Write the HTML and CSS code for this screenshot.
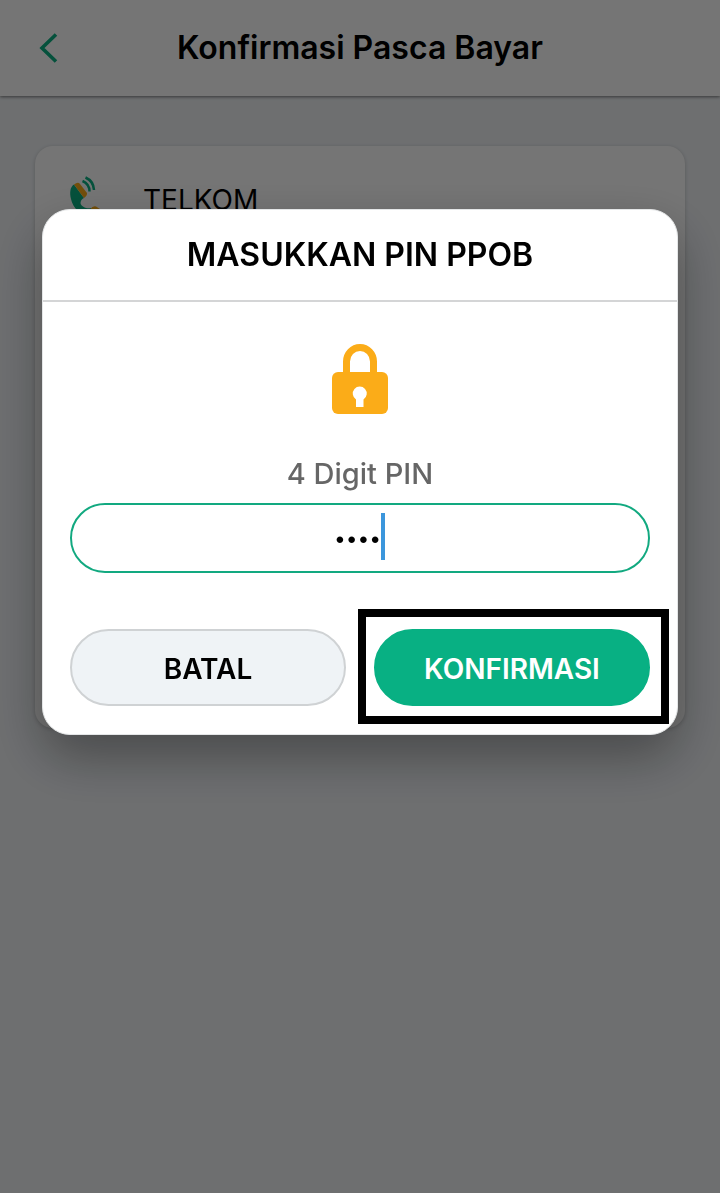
FILE: index.html
```html
<!DOCTYPE html>
<html lang="id">
<head>
<meta charset="utf-8">
<meta name="viewport" content="width=device-width, initial-scale=1">
<title>Konfirmasi Pasca Bayar</title>
<link rel="stylesheet" href="styles.css">
</head>
<body>
<header class="topbar">
  <button class="back" type="button" aria-label="Kembali">
    <svg width="20" height="30" viewBox="0 0 20 30"><path d="M18 1.500 4 15 18 28.500" fill="none" stroke="#0bb183" stroke-width="3.6"/></svg>
  </button>
  <h1 class="topbar-title">Konfirmasi Pasca Bayar</h1>
</header>
<main class="page">
  <section class="card">
    <svg class="phone" width="44" height="44" viewBox="0 0 44 44">
      <path d="M7 8.500C3 11 2.500 17 4 23 6 34 18 43 31 39L24 32C20 33 14 31 13.500 27 13.500 24 16 22.500 17 22Z" fill="#0bb183"/>
      <path d="M7 8.500Q11 5.500 13 8L20 17Q20.500 19.500 17 22Z" fill="#fbac18"/>
      <path d="M23 33.500Q26 29.500 29 30.500L33 33 31 39Z" fill="#fbac18"/>
      <path d="M15.500 5Q22.500 8 22.500 15.500M18.500 1.500Q26.500 5 27 14" fill="none" stroke="#0bb183" stroke-width="2.500"/>
    </svg>
    <span class="card-name">TELKOM</span>
  </section>
</main>
<div class="overlay">
  <form class="modal" role="dialog" aria-labelledby="modal-title">
    <h2 class="modal-title" id="modal-title">MASUKKAN PIN PPOB</h2>
    <div class="modal-body">
      <svg class="lock" width="56" height="70" viewBox="0 0 56 70">
        <path d="M14.500 30V17.500A13.500 14 0 0 1 41.500 17.500V30" fill="none" stroke="#fbac18" stroke-width="7"/>
        <rect y="28" width="56" height="42" rx="6" fill="#fbac18"/>
        <path d="M24 63V55.500A7 7 0 1 1 31.500 55.500V63Z" fill="#fff"/>
      </svg>
      <label class="pin-label" for="pin">4 Digit PIN</label>
      <div class="pin-field">
        <input class="pin" id="pin" type="password" maxlength="4" inputmode="numeric" value="1234">
        <span class="caret"></span>
      </div>
      <div class="actions">
        <button class="btn btn-cancel" type="button">BATAL</button>
        <div class="highlighted"><button class="btn btn-confirm" type="submit">KONFIRMASI</button></div>
      </div>
    </div>
  </form>
</div>
</body>
</html>
```
FILE: styles.css
```css
* {
  box-sizing: border-box;
}

body {
  margin: 0;
  min-height: 100vh;
  background: #eff2f5;
  color: #000;
  font-family: Inter, "Noto Sans", sans-serif;
}

button,
input {
  font-family: inherit;
}

.topbar {
  display: grid;
  grid-template-columns: 60px 1fr 60px;
  align-items: center;
  height: 96px;
  padding: 0 20px;
  background: #fff;
  box-shadow: 0 1px 3px rgba(0, 0, 0, 0.5);
}

.back {
  display: flex;
  padding: 0 0 0 18px;
  border: 0;
  background: none;
}

.topbar-title {
  margin: 0;
  text-align: center;
  font-size: 32px;
  font-weight: 600;
  line-height: 40px;
}

.page {
  padding: 50px 35px;
}

.card {
  display: flex;
  align-items: flex-start;
  gap: 32px;
  min-height: 582px;
  padding: 30px 32px;
  border-radius: 18px;
  background: #fff;
  box-shadow: 0 1px 4px rgba(0, 0, 0, 0.2);
}

.card-name {
  padding-top: 6px;
  font-size: 28px;
  line-height: 36px;
}

.overlay {
  position: fixed;
  inset: 0;
  padding: 209px 42px 0;
  background: rgba(0, 0, 0, 0.54);
}

.modal {
  border: 1px solid #e4e6e7;
  border-radius: 28px;
  background: #fff;
  box-shadow: 0 22px 52px rgba(0, 0, 0, 0.34);
}

.modal-title {
  margin: 0;
  padding: 25px 20px;
  border-bottom: 2px solid #d4d5d6;
  text-align: center;
  font-size: 32px;
  font-weight: 600;
  line-height: 40px;
}

.modal-body {
  display: flex;
  flex-direction: column;
  align-items: center;
  padding: 42px 27px 28px;
}

.pin-label {
  margin: 41px 0 11px;
  color: #666;
  font-size: 29px;
  font-weight: 500;
  line-height: 37px;
}

.pin-field {
  position: relative;
  width: 100%;
}

.pin {
  display: block;
  width: 100%;
  height: 70px;
  padding: 0 29px 0 24px;
  border: 2px solid #12a980;
  border-radius: 35px;
  background: #fff;
  color: #000;
  text-align: center;
  font-size: 21px;
  outline: 0;
}

.caret {
  position: absolute;
  top: 10px;
  left: calc(50% + 21px);
  width: 4px;
  height: 47px;
  background: #3b96dc;
}

.actions {
  display: grid;
  grid-template-columns: 1fr 1fr;
  gap: 28px;
  width: 100%;
  margin-top: 56px;
}

.btn {
  width: 100%;
  height: 77px;
  padding: 2px 0 0;
  border: 2px solid #cfd2d4;
  border-radius: 39px;
  font-size: 28px;
  font-weight: 600;
}

.btn-cancel {
  background: #eff3f6;
  color: #000;
}

.highlighted {
  position: relative;
}

.highlighted::after {
  content: "";
  position: absolute;
  inset: -20px -19px -18px -16px;
  border: 8px solid #000;
  pointer-events: none;
}

.btn-confirm {
  border-color: #08b083;
  background: #08b083;
  color: #fff;
}
```
